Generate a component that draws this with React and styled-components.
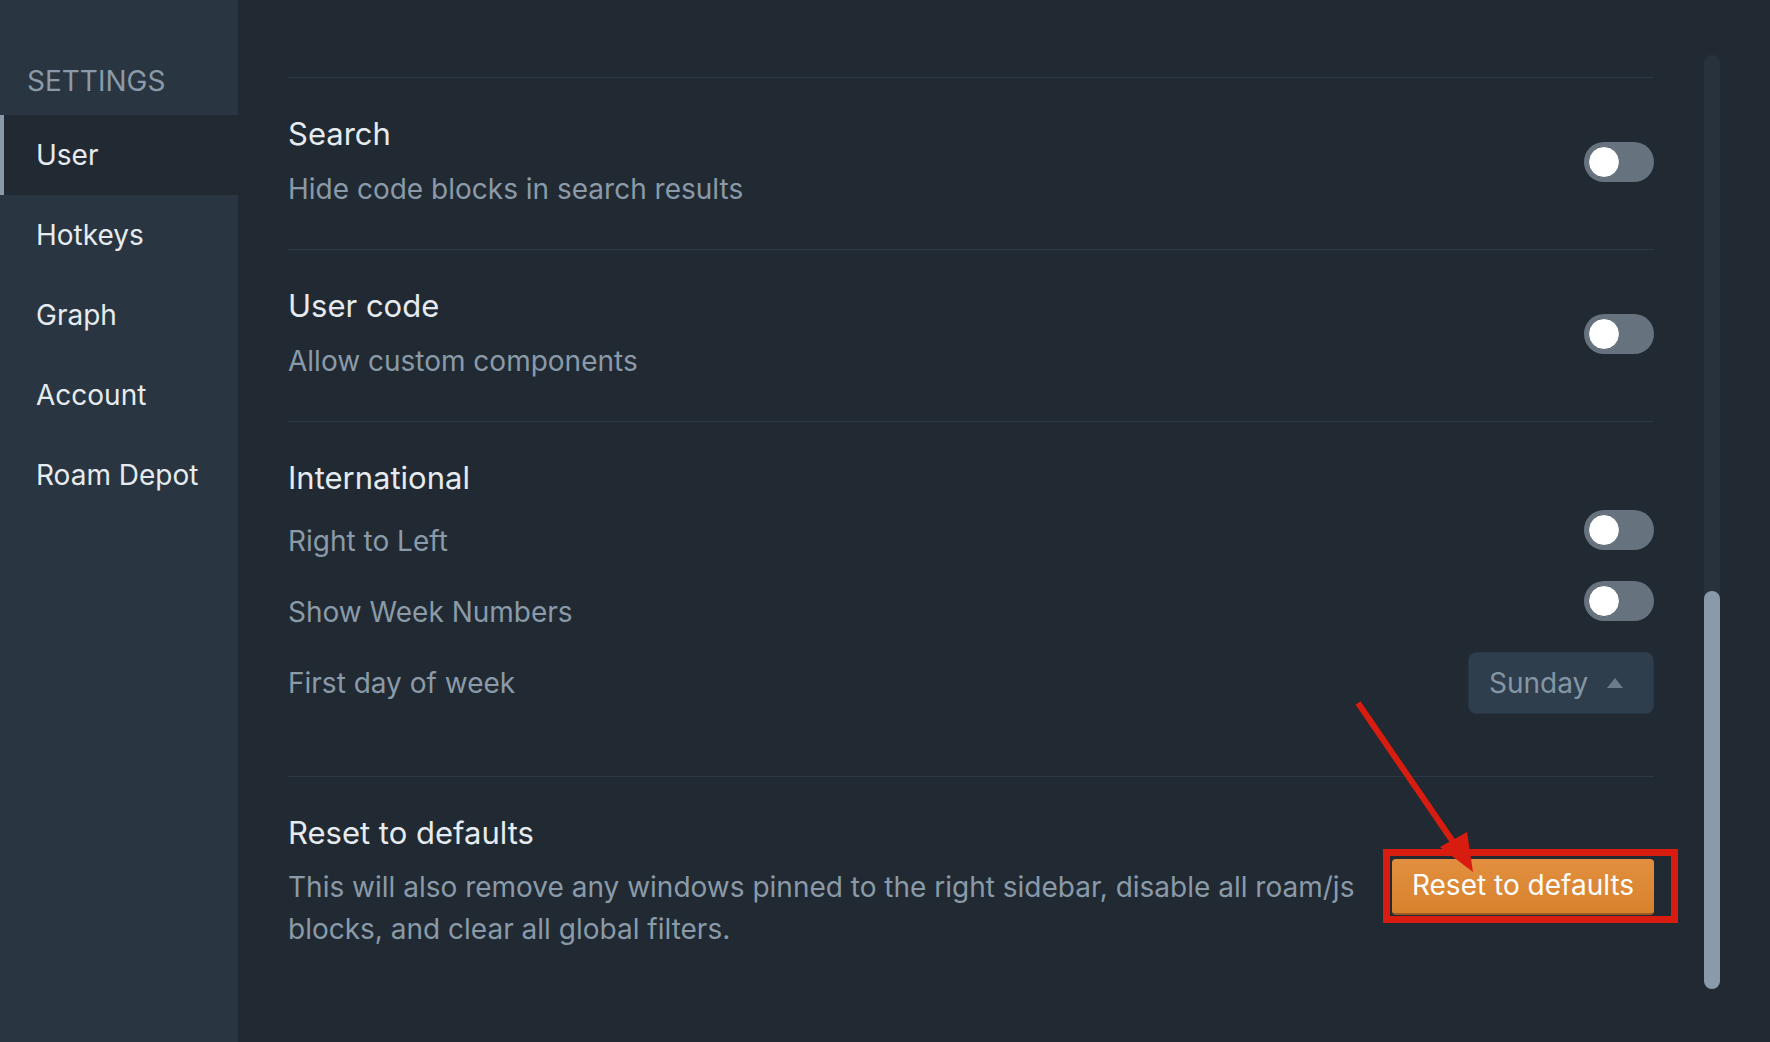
import React from 'react';
import styled, { createGlobalStyle } from 'styled-components';

const GlobalStyle = createGlobalStyle`
  html, body {
    margin: 0;
    padding: 0;
    background: #212a33;
  }
  body {
    font-family: 'Inter', 'Noto Sans', sans-serif;
    -webkit-font-smoothing: antialiased;
  }
`;

const Page = styled.div`
  position: relative;
  display: flex;
  width: 1770px;
  height: 1042px;
  overflow: hidden;
  background: #212a33;
`;

const Sidebar = styled.nav`
  width: 238px;
  flex-shrink: 0;
  background: #293540;
  display: flex;
  flex-direction: column;
`;

const SidebarHeader = styled.div`
  box-sizing: border-box;
  height: 115px;
  padding: 61px 0 0 27px;
  font-size: 28px;
  line-height: 40px;
  color: #8a9aa8;
  text-transform: uppercase;
`;

const NavItem = styled.div`
  box-sizing: border-box;
  height: 80px;
  display: flex;
  align-items: center;
  padding-left: 36px;
  font-size: 28px;
  color: #e6ebef;
  background: ${p => (p.$active ? '#212a33' : 'transparent')};
  box-shadow: ${p => (p.$active ? 'inset 4px 0 0 #8a9aa8' : 'none')};
`;

const Main = styled.main`
  flex: 1;
  display: flex;
`;

const Content = styled.div`
  flex: 1;
  padding: 77px 50px 0 50px;
`;

const Section = styled.section`
  display: flex;
  align-items: center;
  justify-content: space-between;
  gap: 30px;
  border-top: 1px solid #2c3844;
  padding: 36px 0 ${p => p.$bottom || 40}px;
`;

const SectionBody = styled.div`
  flex: 1;
  display: flex;
  flex-direction: column;
`;

const Title = styled.div`
  font-size: 31px;
  line-height: 40px;
  color: #e6ebef;
`;

const Description = styled.div`
  margin-top: ${p => (p.$long ? 13 : 15)}px;
  font-size: 28px;
  line-height: ${p => (p.$long ? 42 : 40)}px;
  color: #8a9aa8;
  max-width: 1080px;
`;

const OptionList = styled.div`
  margin-top: 12px;
  display: flex;
  flex-direction: column;
  gap: 9px;
`;

const OptionRow = styled.div`
  height: 62px;
  display: flex;
  align-items: center;
  justify-content: space-between;
  font-size: 28px;
  color: #8a9aa8;
  & > label {
    line-height: 40px;
  }
`;

const ToggleTrack = styled.div`
  box-sizing: border-box;
  width: 70px;
  height: 40px;
  border-radius: 20px;
  background: #66737f;
  padding: 4px;
  flex-shrink: 0;
  align-self: ${p => (p.$top ? 'flex-start' : 'center')};
`;

const ToggleKnob = styled.div`
  box-sizing: border-box;
  width: 32px;
  height: 32px;
  border-radius: 50%;
  background: #ffffff;
  border: 1px solid #56626d;
`;

const Select = styled.div`
  box-sizing: border-box;
  width: 186px;
  height: 62px;
  display: flex;
  align-items: center;
  justify-content: space-between;
  padding: 0 30px 0 20px;
  background: #2f3e4c;
  border: 1px solid #2a3743;
  border-radius: 8px;
  font-size: 28px;
  color: #8496a5;
`;

const Caret = styled.span`
  width: 0;
  height: 0;
  border-left: 8px solid transparent;
  border-right: 8px solid transparent;
  border-bottom: 10px solid #6b7d8c;
`;

const ResetButton = styled.button`
  box-sizing: border-box;
  width: 262px;
  height: 56px;
  flex-shrink: 0;
  margin-top: 10px;
  border: none;
  border-bottom: 2px solid #9a5a22;
  border-radius: 4px;
  background: linear-gradient(#e18f40, #d8822c);
  color: #ffffff;
  font-family: 'Inter', 'Noto Sans', sans-serif;
  font-size: 28px;
  padding: 0 0 2px;
`;

const ScrollColumn = styled.div`
  width: 16px;
  margin-right: 50px;
  padding-top: 55px;
`;

const ScrollTrack = styled.div`
  height: 934px;
  border-radius: 8px;
  background: #27323d;
  display: flex;
  flex-direction: column;
  justify-content: flex-end;
`;

const ScrollThumb = styled.div`
  height: 398px;
  border-radius: 8px;
  background: #8a9aa8;
`;

const Annotation = styled.svg`
  position: absolute;
  left: 0;
  top: 0;
  pointer-events: none;
`;

const Toggle = ({ top }) => (
  <ToggleTrack $top={top}>
    <ToggleKnob />
  </ToggleTrack>
);

const navItems = ['User', 'Hotkeys', 'Graph', 'Account', 'Roam Depot'];

export default function App() {
  return (
    <Page>
      <GlobalStyle />
      <Sidebar>
        <SidebarHeader>Settings</SidebarHeader>
        {navItems.map(name => (
          <NavItem key={name} $active={name === 'User'}>{name}</NavItem>
        ))}
      </Sidebar>
      <Main>
        <Content>
          <Section>
            <SectionBody>
              <Title>Search</Title>
              <Description>Hide code blocks in search results</Description>
            </SectionBody>
            <Toggle />
          </Section>
          <Section>
            <SectionBody>
              <Title>User code</Title>
              <Description>Allow custom components</Description>
            </SectionBody>
            <Toggle />
          </Section>
          <Section $bottom={62}>
            <SectionBody>
              <Title>International</Title>
              <OptionList>
                <OptionRow>
                  <label>Right to Left</label>
                  <Toggle top />
                </OptionRow>
                <OptionRow>
                  <label>Show Week Numbers</label>
                  <Toggle top />
                </OptionRow>
                <OptionRow>
                  <label>First day of week</label>
                  <Select>
                    Sunday
                    <Caret />
                  </Select>
                </OptionRow>
              </OptionList>
            </SectionBody>
          </Section>
          <Section>
            <SectionBody>
              <Title>Reset to defaults</Title>
              <Description $long>
                This will also remove any windows pinned to the right sidebar, disable all roam/js blocks, and clear all global filters.
              </Description>
            </SectionBody>
            <ResetButton>Reset to defaults</ResetButton>
          </Section>
        </Content>
        <ScrollColumn>
          <ScrollTrack>
            <ScrollThumb />
          </ScrollTrack>
        </ScrollColumn>
      </Main>
      <Annotation width="1770" height="1042" viewBox="0 0 1770 1042">
        <rect x="1386.5" y="852.5" width="288" height="67" fill="none" stroke="#d91c10" strokeWidth="7" />
        <line x1="1358" y1="703" x2="1458" y2="849" stroke="#d91c10" strokeWidth="6" />
        <polygon points="1473,872 1440,847 1467,832" fill="#d91c10" />
      </Annotation>
    </Page>
  );
}
